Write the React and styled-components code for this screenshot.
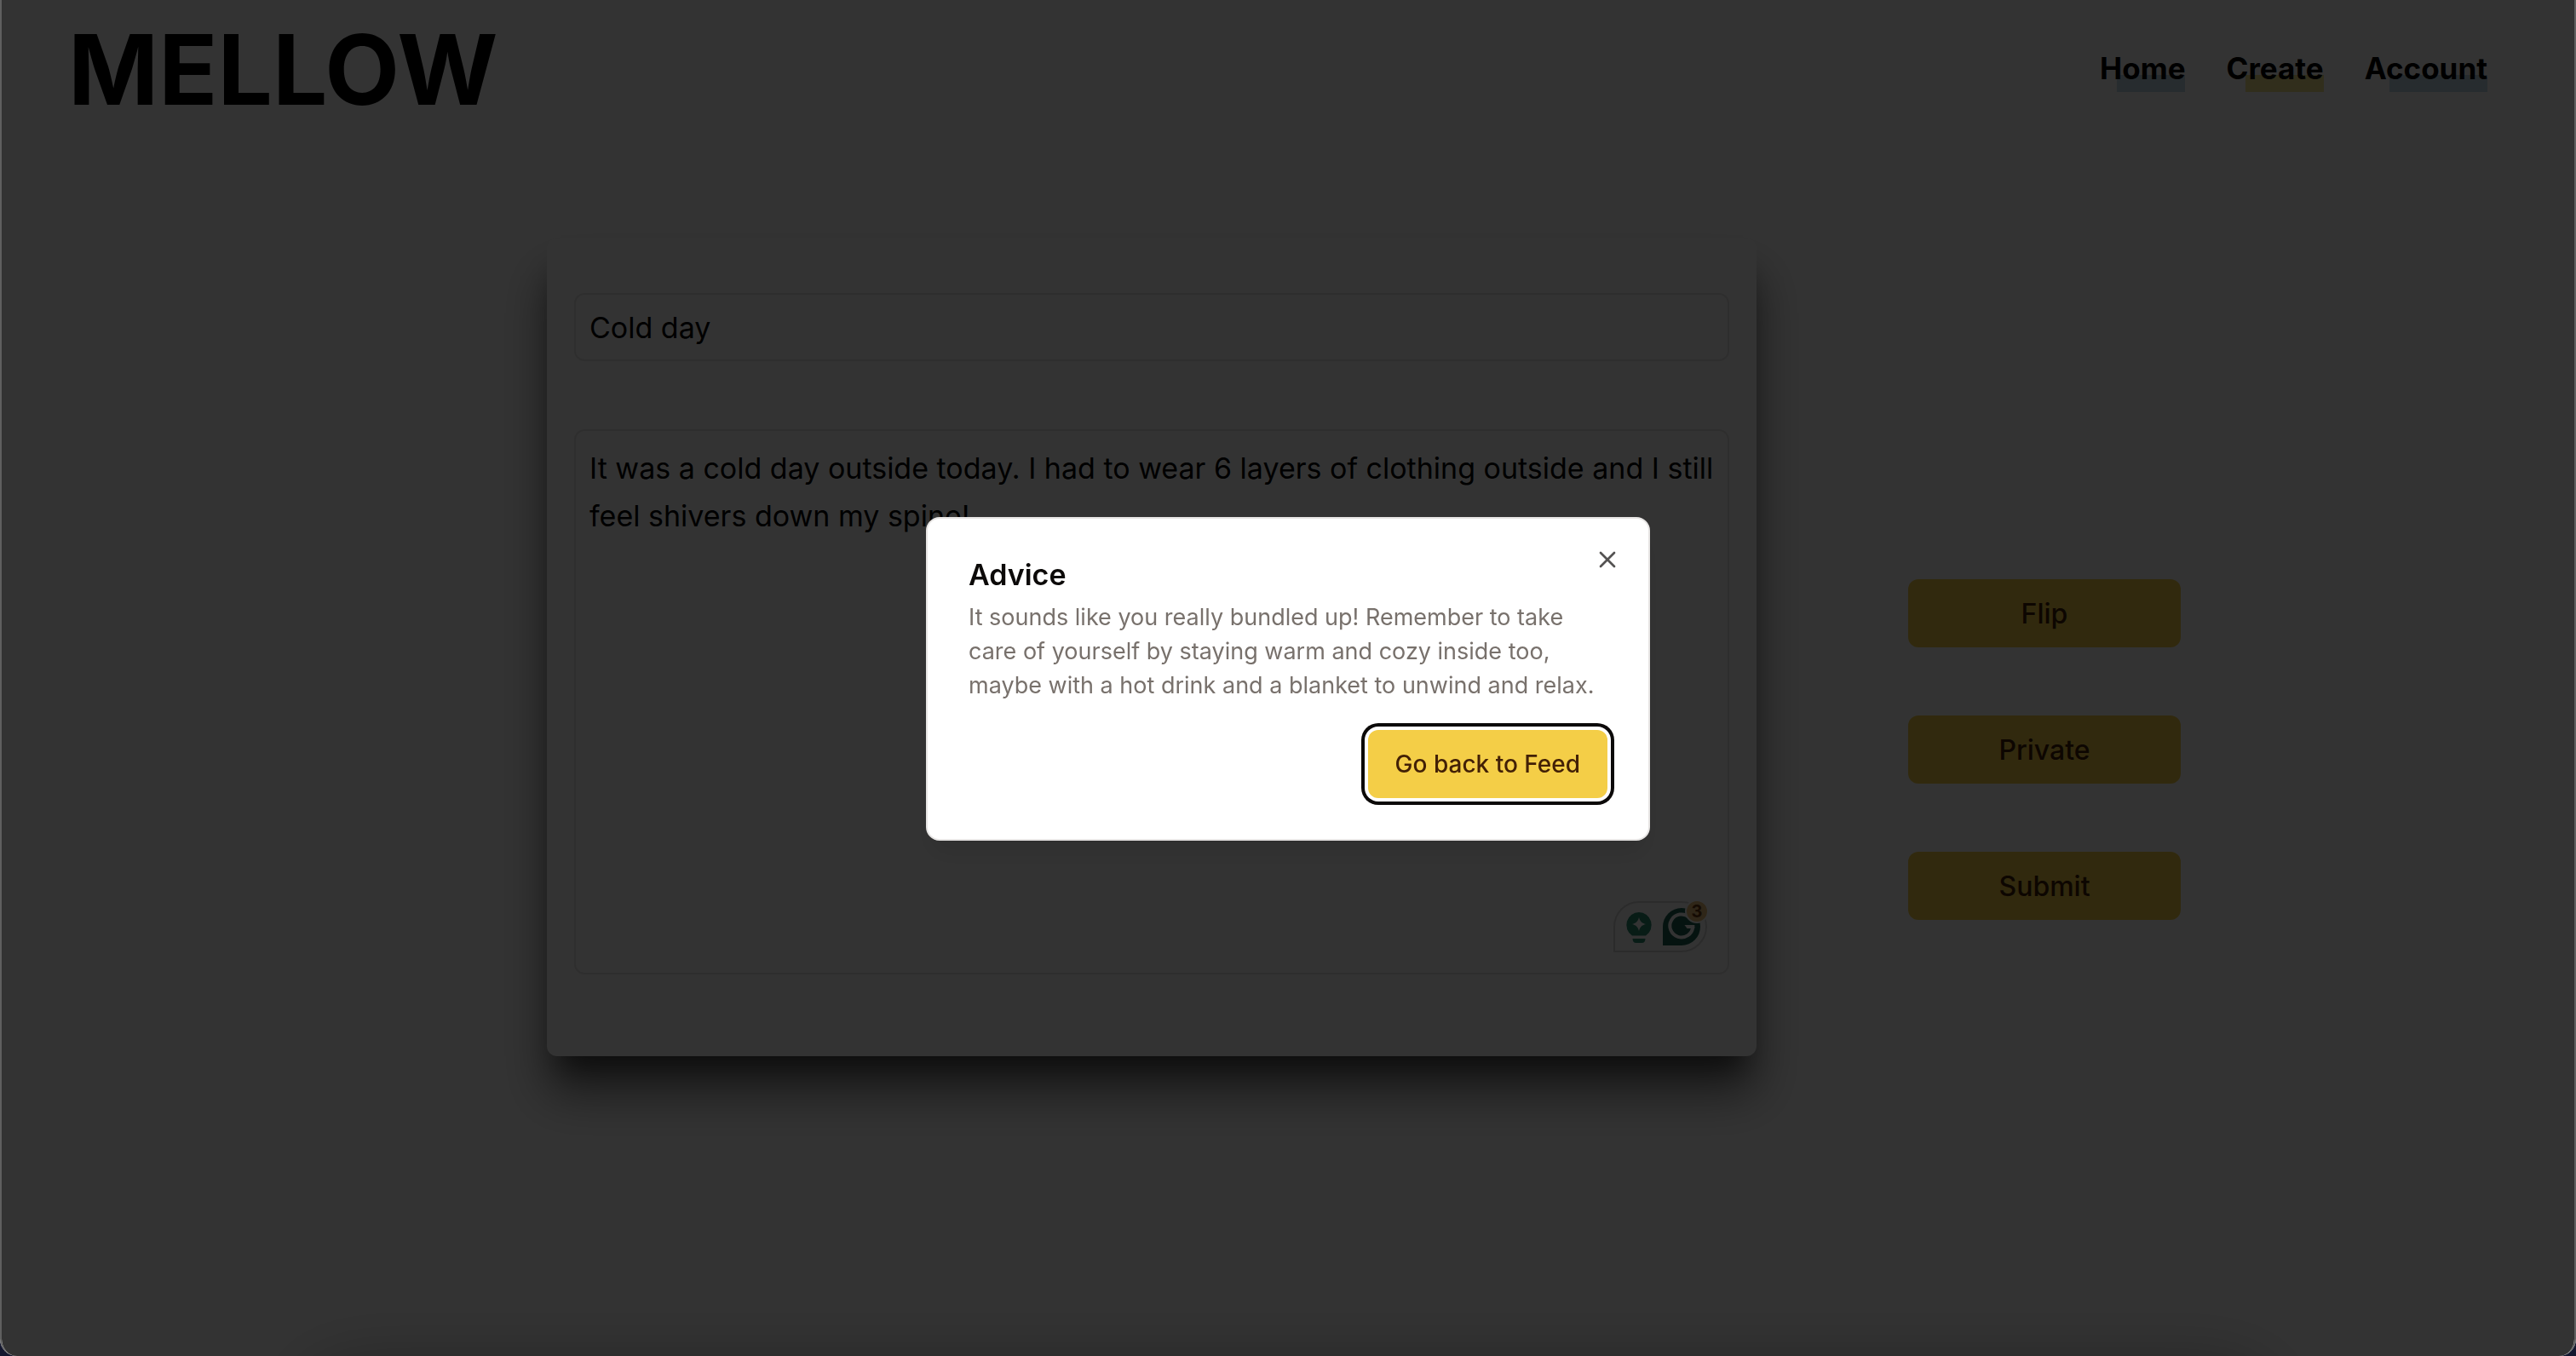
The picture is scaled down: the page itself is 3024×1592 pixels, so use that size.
import React from "react";
import styled, { createGlobalStyle } from "styled-components";
import { X } from "lucide-react";

const GlobalStyle = createGlobalStyle`
  *, *::before, *::after { box-sizing: border-box; }
  body {
    margin: 0;
    background: #14172f;
    color: #0c0a09;
    font-family: Inter, "Liberation Sans", sans-serif;
  }
  button, input, textarea { font: inherit; color: inherit; }
`;

const Page = styled.div`
  position: relative;
  min-height: 100vh;
  display: flex;
  flex-direction: column;
  overflow: hidden;
  background: #fff;
  border-radius: 0 0 20px 20px;
`;

const Header = styled.header`
  display: flex;
  justify-content: space-between;
  align-items: center;
  padding: 22px 104px 0 80px;
`;

const Brand = styled.h1`
  margin: 0;
  color: #000;
  font-size: 114px;
  line-height: 120px;
  font-weight: 700;
`;

const Nav = styled.nav`
  display: flex;
  gap: 48px;
  padding-bottom: 4px;
`;

const NavLink = styled.a`
  color: #000;
  font-size: 35px;
  line-height: 56px;
  font-weight: 700;
  text-decoration: none;
  background: linear-gradient(${(p) => p.$mark}, ${(p) => p.$mark}) right 36px / 80% 20px no-repeat;
`;

const Main = styled.main`
  flex: 1;
  display: flex;
  align-items: flex-start;
  gap: 178px;
  padding: 138px 464px 0 642px;
`;

const Card = styled.form`
  flex: 1;
  display: flex;
  flex-direction: column;
  gap: 80px;
  padding: 64px 32px 96px;
  border-radius: 12px;
  background: #fff;
  box-shadow: 0 28px 32px -16px rgba(0, 0, 0, 0.55), 0 44px 56px rgba(0, 0, 0, 0.48);
`;

const TitleInput = styled.input`
  width: 100%;
  height: 80px;
  padding: 0 16px;
  border: 2px solid #e7e5e4;
  border-radius: 12px;
  background: transparent;
  color: #000;
  font-size: 34px;
`;

const EditorWrap = styled.div`
  position: relative;
  display: flex;
`;

const Editor = styled.textarea`
  width: 100%;
  height: 640px;
  padding: 16px;
  border: 2px solid #e7e5e4;
  border-radius: 12px;
  background: transparent;
  color: #000;
  font-size: 34px;
  line-height: 56px;
  resize: none;
`;

const Assistant = styled.div`
  position: absolute;
  right: 26px;
  bottom: 26px;
  display: flex;
  width: 110px;
  height: 60px;
  border: 2px solid #d6d6d6;
  border-radius: 30px 30px 30px 0;
  background: #fff;
`;

const AssistantIcons = styled.svg`
  display: block;
  flex: none;
`;

const Badge = styled.span`
  position: absolute;
  top: -4px;
  right: -4px;
  width: 28px;
  height: 28px;
  border: 2px solid #fff;
  border-radius: 50%;
  background: #e8be78;
  color: #6b3a10;
  font-size: 20px;
  line-height: 24px;
  font-weight: 700;
  text-align: center;
`;

const Actions = styled.div`
  display: flex;
  flex-direction: column;
  gap: 80px;
  width: 320px;
  padding-top: 400px;
`;

const Button = styled.button`
  height: 80px;
  padding: 0 32px;
  border: 0;
  border-radius: 12px;
  background: #f4ce47;
  color: #422006;
  font-size: ${(p) => (p.$small ? "28px" : "32px")};
  font-weight: 500;
  box-shadow: ${(p) => (p.$focused ? "0 0 0 4px #fff, 0 0 0 8px #0c0a09" : "none")};
  outline: none;
`;

const Overlay = styled.div`
  position: fixed;
  inset: 0;
  display: flex;
  align-items: center;
  justify-content: center;
  padding-top: 2px;
  overflow: hidden;
  border: solid #5f5f5f;
  border-width: 0 2px;
  border-radius: 0 0 20px 20px;
  background: rgba(0, 0, 0, 0.8);
  background-clip: padding-box;

  /* soft shade rising from the bottom edge of the window */
  &::after {
    content: "";
    position: absolute;
    left: 12%;
    right: 12%;
    bottom: -220px;
    height: 200px;
    border-radius: 40px;
    box-shadow: 0 0 90px rgba(0, 0, 0, 0.38);
  }
`;

const Dialog = styled.div`
  position: relative;
  width: 850px;
  padding: 48px;
  border: 2px solid #e7e5e4;
  border-radius: 16px;
  background: #fff;
  box-shadow: 0 20px 30px -6px rgba(0, 0, 0, 0.1);
`;

const DialogTitle = styled.h2`
  margin: 0 0 12px;
  font-size: 34px;
  line-height: 36px;
  font-weight: 600;
`;

const DialogText = styled.p`
  margin: 0;
  color: #78716c;
  font-size: 27px;
  line-height: 40px;
`;

const DialogFooter = styled.div`
  display: flex;
  justify-content: flex-end;
  padding-top: 32px;
`;

const CloseButton = styled.button`
  position: absolute;
  top: 32px;
  right: 32px;
  display: flex;
  padding: 0;
  border: 0;
  background: none;
  opacity: 0.7;
`;

const LINKS = [
  { label: "Home", mark: "#c0dde8" },
  { label: "Create", mark: "#f5e58c" },
  { label: "Account", mark: "#c0dde8" },
];

export default function App() {
  return (
    <>
      <GlobalStyle />
      <Page>
        <Header>
          <Brand>MELLOW</Brand>
          <Nav>
            {LINKS.map((l) => (
              <NavLink key={l.label} href="#" $mark={l.mark}>{l.label}</NavLink>
            ))}
          </Nav>
        </Header>
        <Main>
          <Card id="entry">
            <TitleInput aria-label="Title" defaultValue="Cold day" />
            <EditorWrap>
              <Editor
                aria-label="Entry"
                spellCheck={false}
                defaultValue="It was a cold day outside today. I had to wear 6 layers of clothing outside and I still feel shivers down my spine!"
              />
              <Assistant>
                <AssistantIcons width="106" height="56" viewBox="0 0 106 56" aria-hidden="true">
                  <path fill="#2a8a70" d="M28 11a15 15 0 0 0-8 27.500h16A15 15 0 0 0 28 11z" />
                  <path fill="#fff" d="M28 17c1.500 5 3 6.500 8 8-5 1.500-6.500 3-8 8-1.500-5-3-6.500-8-8 5-1.500 6.500-3 8-8z" />
                  <path fill="#2a8a70" d="M20.500 42h15c0 3-1.500 5-4 5h-7c-2.500 0-4-2-4-5z" />
                  <path fill="#1c6152" d="M78 6a22 22 0 0 1 0 44H56V28A22 22 0 0 1 78 6z" />
                  <path fill="none" stroke="#fff" strokeWidth="4" d="M87 17A13.500 13.500 0 1 0 91.300 28" />
                  <path fill="#fff" d="M81.500 26H93.300V30H84.500z" />
                </AssistantIcons>
                <Badge>3</Badge>
              </Assistant>
            </EditorWrap>
          </Card>
          <Actions>
            <Button type="button">Flip</Button>
            <Button type="button">Private</Button>
            <Button type="submit" form="entry">Submit</Button>
          </Actions>
        </Main>
      </Page>
      <Overlay>
        <Dialog role="alertdialog" aria-labelledby="advice-title" aria-describedby="advice-text">
          <DialogTitle id="advice-title">Advice</DialogTitle>
          <DialogText id="advice-text">
            It sounds like you really bundled up! Remember to take care of yourself by staying warm and cozy inside too, maybe with a hot drink and a blanket to unwind and relax.
          </DialogText>
          <DialogFooter>
            <Button type="button" $small $focused>Go back to Feed</Button>
          </DialogFooter>
          <CloseButton type="button" aria-label="Close"><X size={32} /></CloseButton>
        </Dialog>
      </Overlay>
    </>
  );
}
